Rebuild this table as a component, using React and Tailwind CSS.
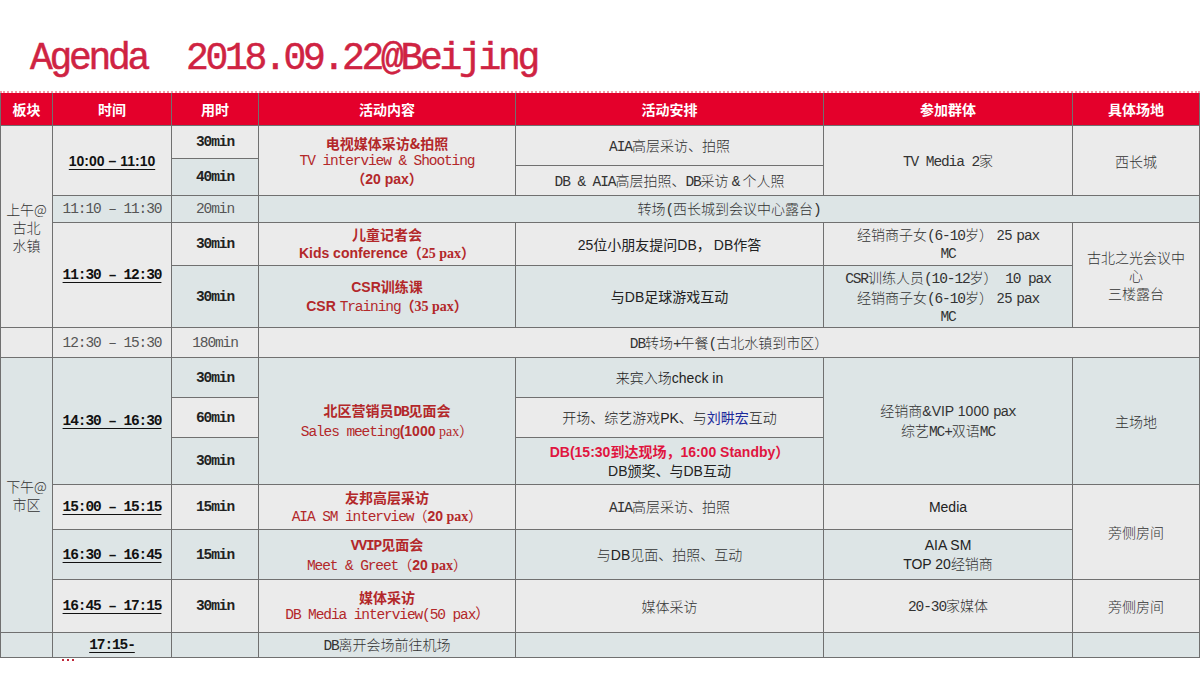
const mono = "font-['Liberation_Mono','Noto_Sans_CJK_SC',monospace] text-[14.5px] tracking-[-1.1px]"
const cjk = "font-['Noto_Sans_CJK_SC',sans-serif] text-[14px]"
const arial = "font-['Liberation_Sans','Noto_Sans_CJK_SC',sans-serif] text-[14px]"
const serif = "font-['Liberation_Serif','Noto_Sans_CJK_SC',serif] text-[14px]"
const red = 'text-[#b3282a]'
const G = 'bg-[#ebebeb]'
const B = 'bg-[#dde5e6]'
const ul = 'underline underline-offset-[3px] decoration-1'

function Cell({ pos, bg, children, className = '' }) {
  return (
    <div className={`${pos} ${bg} flex flex-col items-center justify-center text-center leading-[18px] text-[#333] ${className}`}>
      {children}
    </div>
  )
}

// light cjk, the simsun-looking parts of the sheet
function L({ children }) {
  return <span className={`${cjk} font-light`}>{children}</span>
}

function M({ children, className = '' }) {
  return <span className={`${mono} ${className}`}>{children}</span>
}

function A({ children, className = '' }) {
  return <span className={`${arial} ${className}`}>{children}</span>
}

const headers = ['板块', '时间', '用时', '活动内容', '活动安排', '参加群体', '具体场地']

export default function App() {
  return (
    <div className="w-[1200px] h-[675px] bg-white overflow-hidden">
      <div className="h-[91px] pl-[30px] pt-[40px]">
        <div className="font-['Liberation_Mono',monospace] text-[38px] leading-none tracking-[-3.3px] text-[#cf2342] whitespace-pre [-webkit-text-stroke:0.5px_#cf2342]">
          Agenda  2018.09.22@Beijing
        </div>
      </div>
      <div className="h-[2px] border-t-2 border-dotted border-[#f29aaa]" />

      <div className="grid w-[1200px] gap-px bg-[#707070] px-px pb-px grid-cols-[51px_118px_86px_256px_307px_248px_126px] grid-rows-[32px_32px_6px_29px_26px_42px_61px_29px_39px_39px_46px_44px_49px_52px_24px]">
        {headers.map((h) => (
          <div key={h} className={`bg-[#e4002b] flex items-center justify-center text-white font-bold ${cjk}`}>
            {h}
          </div>
        ))}

        {/* 上午 */}
        <Cell pos="col-start-1 row-start-2 row-end-8" bg={G}>
          <div className={`${cjk} font-light`}>上午@</div>
          <div className={`${cjk} font-light`}>古北</div>
          <div className={`${cjk} font-light`}>水镇</div>
        </Cell>
        <Cell pos="col-start-2 row-start-2 row-end-5" bg={G}>
          <A className={`font-bold text-[#111] ${ul}`}>10:00 – 11:10</A>
        </Cell>
        <Cell pos="col-start-3 row-start-2 row-end-3" bg={G}>
          <M className="font-bold text-[#222]">30min</M>
        </Cell>
        <Cell pos="col-start-3 row-start-3 row-end-5" bg={B}>
          <M className="font-bold text-[#222]">40min</M>
        </Cell>
        <Cell pos="col-start-4 row-start-2 row-end-5" bg={G}>
          <div className={`${cjk} font-bold ${red}`}>电视媒体采访&拍照</div>
          <div className={`${mono} ${red}`}>TV interview & Shooting</div>
          <div className={`${arial} font-bold ${red}`}>（20 pax）</div>
        </Cell>
        <Cell pos="col-start-5 row-start-2 row-end-4" bg={G}>
          <div><M>AIA</M><L>高层采访、拍照</L></div>
        </Cell>
        <Cell pos="col-start-5 row-start-4 row-end-5" bg={G}>
          <div><M>DB & AIA</M><L>高层拍照、</L><M>DB</M><L>采访 </L><M>&</M><L> 个人照</L></div>
        </Cell>
        <Cell pos="col-start-6 row-start-2 row-end-5" bg={G}>
          <div><M>TV Media 2</M><L>家</L></div>
        </Cell>
        <Cell pos="col-start-7 row-start-2 row-end-5" bg={G}>
          <L>西长城</L>
        </Cell>

        {/* 11:10 */}
        <Cell pos="col-start-2 row-start-5 row-end-6" bg={B}>
          <M className="text-[#555]">11:10 – 11:30</M>
        </Cell>
        <Cell pos="col-start-3 row-start-5 row-end-6" bg={B}>
          <M className="text-[#555]">20min</M>
        </Cell>
        <Cell pos="col-start-4 col-end-8 row-start-5 row-end-6" bg={B}>
          <div><L>转场</L><M>(</M><L>西长城到会议中心露台</L><M>)</M></div>
        </Cell>

        {/* 11:30 */}
        <Cell pos="col-start-2 row-start-6 row-end-8" bg={G}>
          <M className={`font-bold text-[#111] ${ul}`}>11:30 – 12:30</M>
        </Cell>
        <Cell pos="col-start-3 row-start-6 row-end-7" bg={G}>
          <M className="font-bold text-[#222]">30min</M>
        </Cell>
        <Cell pos="col-start-3 row-start-7 row-end-8" bg={B}>
          <M className="font-bold text-[#222]">30min</M>
        </Cell>
        <Cell pos="col-start-4 row-start-6 row-end-7" bg={G}>
          <div className={`${cjk} font-bold ${red}`}>儿童记者会</div>
          <div className={red}>
            <A className="font-bold">Kids conference</A>
            <span className={`${cjk} font-bold`}>（</span>
            <span className={`${serif} font-bold`}>25 pax</span>
            <span className={`${cjk} font-bold`}>）</span>
          </div>
        </Cell>
        <Cell pos="col-start-4 row-start-7 row-end-8" bg={B}>
          <div className={`${red}`}>
            <A className="font-bold">CSR</A><span className={`${cjk} font-bold`}>训练课</span>
          </div>
          <div className={red}>
            <A className="font-bold">CSR </A><M>Training</M>
            <span className={`${cjk} font-bold`}>（</span>
            <span className={`${serif} font-bold`}>35 pax</span>
            <span className={`${cjk} font-bold`}>）</span>
          </div>
        </Cell>
        <Cell pos="col-start-5 row-start-6 row-end-7" bg={G}>
          <div className={`${cjk} text-[#222]`}>
            <A>25</A>位小朋友提问<A>DB</A>， <A>DB</A>作答
          </div>
        </Cell>
        <Cell pos="col-start-5 row-start-7 row-end-8" bg={B}>
          <div className={`${cjk} text-[#222]`}>与<A>DB</A>足球游戏互动</div>
        </Cell>
        <Cell pos="col-start-6 row-start-6 row-end-7" bg={G}>
          <div><L>经销商子女</L><M>(6-10</M><L>岁）</L><A> 25 </A><M>pax</M></div>
          <M>MC</M>
        </Cell>
        <Cell pos="col-start-6 row-start-7 row-end-8" bg={B}>
          <div><M>CSR</M><L>训练人员</L><M>(10-12</M><L>岁）</L><M> 10 pax</M></div>
          <div><L>经销商子女</L><M>(6-10</M><L>岁）</L><A> 25 </A><M>pax</M></div>
          <M>MC</M>
        </Cell>
        <Cell pos="col-start-7 row-start-6 row-end-8" bg={G}>
          <div className={`${cjk} font-light`}>古北之光会议中</div>
          <div className={`${cjk} font-light`}>心</div>
          <div className={`${cjk} font-light`}>三楼露台</div>
        </Cell>

        {/* 12:30 */}
        <Cell pos="col-start-1 row-start-8 row-end-9" bg={G}>{null}</Cell>
        <Cell pos="col-start-2 row-start-8 row-end-9" bg={G}>
          <M className="text-[#555]">12:30 – 15:30</M>
        </Cell>
        <Cell pos="col-start-3 row-start-8 row-end-9" bg={G}>
          <M className="text-[#555]">180min</M>
        </Cell>
        <Cell pos="col-start-4 col-end-8 row-start-8 row-end-9" bg={G}>
          <div><M>DB</M><L>转场</L><M>+</M><L>午餐</L><M>(</M><L>古北水镇到市区）</L></div>
        </Cell>

        {/* 下午 */}
        <Cell pos="col-start-1 row-start-9 row-end-15" bg={B}>
          <div className={`${cjk} font-light`}>下午@</div>
          <div className={`${cjk} font-light`}>市区</div>
        </Cell>
        <Cell pos="col-start-2 row-start-9 row-end-12" bg={B}>
          <M className={`font-bold text-[#111] ${ul}`}>14:30 – 16:30</M>
        </Cell>
        <Cell pos="col-start-3 row-start-9 row-end-10" bg={B}>
          <M className="font-bold text-[#222]">30min</M>
        </Cell>
        <Cell pos="col-start-3 row-start-10 row-end-11" bg={G}>
          <M className="font-bold text-[#222]">60min</M>
        </Cell>
        <Cell pos="col-start-3 row-start-11 row-end-12" bg={B}>
          <M className="font-bold text-[#222]">30min</M>
        </Cell>
        <Cell pos="col-start-4 row-start-9 row-end-12" bg={B}>
          <div className={`${cjk} font-bold ${red}`}>
            北区营销员<M className="font-bold">DB</M>见面会
          </div>
          <div className={red}>
            <M>Sales meeting</M><A className="font-bold">(1000</A>
            <span className={`${serif}`}> pax</span><span className={cjk}>）</span>
          </div>
        </Cell>
        <Cell pos="col-start-5 row-start-9 row-end-10" bg={B}>
          <div className={`${cjk} text-[#222]`}><L>来宾入场</L><A>check in</A></div>
        </Cell>
        <Cell pos="col-start-5 row-start-10 row-end-11" bg={G}>
          <div className={`${cjk} text-[#222]`}>
            <L>开场、综艺游戏</L><A>PK</A><L>、与</L><span className="text-[#1c2a9c]">刘畊宏</span><L>互动</L>
          </div>
        </Cell>
        <Cell pos="col-start-5 row-start-11 row-end-12" bg={B}>
          <div className={`${arial} font-bold text-[#e0153f]`}>DB(15:30到达现场，16:00 Standby）</div>
          <div className={`${cjk} text-[#222]`}><A>DB</A>颁奖、与<A>DB</A>互动</div>
        </Cell>
        <Cell pos="col-start-6 row-start-9 row-end-12" bg={B}>
          <div><L>经销商</L><A>&VIP 1000 </A><M>pax</M></div>
          <div><L>综艺</L><M>MC+</M><L>双语</L><M>MC</M></div>
        </Cell>
        <Cell pos="col-start-7 row-start-9 row-end-12" bg={B}>
          <L>主场地</L>
        </Cell>

        {/* 15:00 */}
        <Cell pos="col-start-2 row-start-12 row-end-13" bg={G}>
          <M className={`font-bold text-[#111] ${ul}`}>15:00 – 15:15</M>
        </Cell>
        <Cell pos="col-start-3 row-start-12 row-end-13" bg={G}>
          <M className="font-bold text-[#222]">15min</M>
        </Cell>
        <Cell pos="col-start-4 row-start-12 row-end-13" bg={G}>
          <div className={`${cjk} font-bold ${red}`}>友邦高层采访</div>
          <div className={red}>
            <M>AIA SM interview</M><span className={cjk}>（</span>
            <A className="font-bold">20</A><span className={`${serif} font-bold`}> pax</span><span className={cjk}>）</span>
          </div>
        </Cell>
        <Cell pos="col-start-5 row-start-12 row-end-13" bg={G}>
          <div><M>AIA</M><L>高层采访、拍照</L></div>
        </Cell>
        <Cell pos="col-start-6 row-start-12 row-end-13" bg={G}>
          <A className="text-[#222]">Media</A>
        </Cell>
        <Cell pos="col-start-7 row-start-12 row-end-14" bg={G}>
          <L>旁侧房间</L>
        </Cell>

        {/* 16:30 */}
        <Cell pos="col-start-2 row-start-13 row-end-14" bg={B}>
          <M className={`font-bold text-[#111] ${ul}`}>16:30 – 16:45</M>
        </Cell>
        <Cell pos="col-start-3 row-start-13 row-end-14" bg={B}>
          <M className="font-bold text-[#222]">15min</M>
        </Cell>
        <Cell pos="col-start-4 row-start-13 row-end-14" bg={B}>
          <div className={`${red}`}>
            <M className="font-bold">VVIP</M><span className={`${cjk} font-bold`}>见面会</span>
          </div>
          <div className={red}>
            <M>Meet & Greet</M><span className={cjk}>（</span>
            <A className="font-bold">20</A><span className={`${serif} font-bold`}> pax</span><span className={cjk}>）</span>
          </div>
        </Cell>
        <Cell pos="col-start-5 row-start-13 row-end-14" bg={B}>
          <div><L>与</L><A className="text-[#222]">DB</A><L>见面、拍照、互动</L></div>
        </Cell>
        <Cell pos="col-start-6 row-start-13 row-end-14" bg={B}>
          <A className="text-[#222]">AIA SM</A>
          <div><A className="text-[#222]">TOP 20</A><L>经销商</L></div>
        </Cell>

        {/* 16:45 */}
        <Cell pos="col-start-2 row-start-14 row-end-15" bg={G}>
          <M className={`font-bold text-[#111] ${ul}`}>16:45 – 17:15</M>
        </Cell>
        <Cell pos="col-start-3 row-start-14 row-end-15" bg={G}>
          <M className="font-bold text-[#222]">30min</M>
        </Cell>
        <Cell pos="col-start-4 row-start-14 row-end-15" bg={G}>
          <div className={`${cjk} font-bold ${red}`}>媒体采访</div>
          <M className={red}>DB Media interview(50 pax）</M>
        </Cell>
        <Cell pos="col-start-5 row-start-14 row-end-15" bg={G}>
          <L>媒体采访</L>
        </Cell>
        <Cell pos="col-start-6 row-start-14 row-end-15" bg={G}>
          <div><M>20-30</M><L>家媒体</L></div>
        </Cell>
        <Cell pos="col-start-7 row-start-14 row-end-15" bg={G}>
          <L>旁侧房间</L>
        </Cell>

        {/* 17:15 */}
        <Cell pos="col-start-1 row-start-15 row-end-16" bg={B}>{null}</Cell>
        <Cell pos="col-start-2 row-start-15 row-end-16" bg={B}>
          <M className={`font-bold text-[#111] ${ul}`}>17:15-</M>
        </Cell>
        <Cell pos="col-start-3 row-start-15 row-end-16" bg={B}>{null}</Cell>
        <Cell pos="col-start-4 row-start-15 row-end-16" bg={B}>
          <div><M>DB</M><L>离开会场前往机场</L></div>
        </Cell>
        <Cell pos="col-start-5 row-start-15 row-end-16" bg={B}>{null}</Cell>
        <Cell pos="col-start-6 row-start-15 row-end-16" bg={B}>{null}</Cell>
        <Cell pos="col-start-7 row-start-15 row-end-16" bg={B}>{null}</Cell>
      </div>
      {/* clipped red marks under the table */}
      <div className="flex gap-[3px] pl-[62px] pt-[1px]">
        <div className="w-[2px] h-[2px] bg-[#c0283a]" />
        <div className="w-[2px] h-[2px] bg-[#c0283a]" />
        <div className="w-[2px] h-[2px] bg-[#c0283a]" />
      </div>
    </div>
  )
}
